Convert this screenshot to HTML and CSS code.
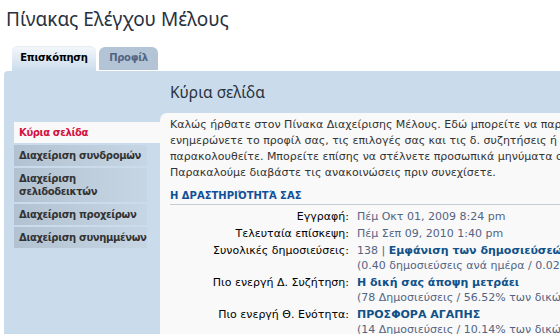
FILE: index.html
```
<html>
<head>
  <meta charset="utf-8">
  <link rel="stylesheet" href="styles.css">
</head>
<body>
  <div class="page">
    <h1 class="page-title">Πίνακας Ελέγχου Μέλους</h1>
    <div class="tabs">
      <a class="tab active">Επισκόπηση</a>
      <a class="tab">Προφίλ</a>
    </div>
    <div class="panel">
      <div class="side">
        <ul class="menu">
          <li class="active"><a>Κύρια σελίδα</a></li>
          <li><a>Διαχείριση συνδρομών</a></li>
          <li><a>Διαχείριση<br>σελιδοδεικτών</a></li>
          <li><a>Διαχείριση προχείρων</a></li>
          <li><a>Διαχείριση συνημμένων</a></li>
        </ul>
      </div>
      <div class="main">
        <h2 class="main-title">Κύρια σελίδα</h2>
        <div class="content">
          <p class="intro">Καλώς ήρθατε στον Πίνακα Διαχείρισης Μέλους. Εδώ μπορείτε να παρακολουθείτε, να δείτε και να<br>
          ενημερώνετε το προφίλ σας, τις επιλογές σας και τις δ. συζητήσεις ή τις θ. ενότητες που<br>
          παρακολουθείτε. Μπορείτε επίσης να στέλνετε προσωπικά μηνύματα σε άλλα μέλη.<br>
          Παρακαλούμε διαβάστε τις ανακοινώσεις πριν συνεχίσετε.</p>
          <h3 class="section">Η ΔΡΑΣΤΗΡΙΌΤΗΤΆ ΣΑΣ</h3>
          <dl class="details">
            <dt>Εγγραφή:</dt>
            <dd>Πέμ Οκτ 01, 2009 8:24 pm</dd>
            <dt>Τελευταία επίσκεψη:</dt>
            <dd>Πέμ Σεπ 09, 2010 1:40 pm</dd>
            <dt>Συνολικές δημοσιεύσεις:</dt>
            <dd>138 | <a>Εμφάνιση των δημοσιεύσεών σας</a><br>(0.40 δημοσιεύσεις ανά ημέρα / 0.02% όλων των δημοσιεύσεων)</dd>
            <dt>Πιο ενεργή Δ. Συζήτηση:</dt>
            <dd><a>Η δική σας άποψη μετράει</a><br>(78 Δημοσιεύσεις / 56.52% των δικών σας δημοσιεύσεων)</dd>
            <dt>Πιο ενεργή Θ. Ενότητα:</dt>
            <dd><a>ΠΡΟΣΦΟΡΑ ΑΓΑΠΗΣ</a><br>(14 Δημοσιεύσεις / 10.14% των δικών σας δημοσιεύσεων)</dd>
          </dl>
        </div>
      </div>
    </div>
  </div>
</body>
</html>
```

FILE: styles.css
```
html, body {
  margin: 0;
  padding: 0;
  overflow: hidden;
  background: #fff;
  font-family: 'DejaVu Sans', Verdana, sans-serif;
}
.page {
  padding: 0 0 0 4px;
  width: 900px;
}
.page-title {
  margin: 0 0 0 2px;
  padding-top: 6px;
  height: 40px;
  font-family: 'Noto Sans', 'Open Sans', sans-serif;
  font-weight: normal;
  font-size: 19px;
  line-height: 26px;
  color: #28313f;
}
.tabs {
  display: flex;
  align-items: flex-end;
  gap: 3px;
  padding-left: 8px;
  height: 25px;
}
.tab {
  display: block;
  font-size: 10px;
  font-weight: bold;
  letter-spacing: -0.3px;
  text-align: center;
  border-radius: 6px 6px 0 0;
}
.tab.active {
  width: 84px;
  height: 25px;
  line-height: 23px;
  color: #000;
  background: linear-gradient(#f4f8fb, #cadceb);
  box-shadow: inset 0 1px 0 #e4edf4;
}
.tab:not(.active) {
  width: 59px;
  height: 23px;
  line-height: 22px;
  margin-bottom: 1px;
  color: #536482;
  background: #b2c4d5;
}
.panel {
  display: flex;
  background: #cadceb;
  height: 280px;
  border-top-left-radius: 4px;
}
.side {
  width: 156px;
  flex: none;
}
.menu {
  list-style: none;
  margin: 51px 0 0 10px;
  padding: 0;
}
.menu li {
  margin-bottom: 2px;
}
.menu a {
  display: block;
  width: 128px;
  padding: 4px 0 4px 5px;
  font-size: 10px;
  letter-spacing: -0.35px;
  line-height: 13px;
  font-weight: bold;
  white-space: nowrap;
  color: #333;
  background: linear-gradient(to right, #b2c2d1, #c6d6e4);
}
.menu li.active a {
  width: 141px;
  color: #d31141;
  background: #f9f9f9;
}
.main {
  flex: 1;
}
.main-title {
  margin: 0;
  height: 42px;
  padding-left: 10px;
  font-family: 'Noto Sans', 'Open Sans', sans-serif;
  font-weight: normal;
  font-size: 15.5px;
  line-height: 43px;
  color: #28313f;
}
.content {
  background: #f9f9f9;
  border-top-left-radius: 7px;
  padding: 4px 10px 0 10px;
  height: 240px;
  font-size: 11px;
  color: #333;
}
.intro {
  margin: 0;
  line-height: 16px;
  white-space: nowrap;
}
.section {
  margin: 8px 0 0 0;
  padding-bottom: 2px;
  font-size: 10px;
  line-height: 13px;
  color: #115098;
  border-bottom: 1px solid #c4ccd4;
  width: 700px;
}
.details {
  display: grid;
  grid-template-columns: 179px 1fr;
  column-gap: 8px;
  row-gap: 2px;
  margin: 4px 0 0 0;
  line-height: 15px;
}
.details dt {
  text-align: right;
  color: #000;
}
.details dd {
  margin: 0;
  color: #536482;
  white-space: nowrap;
}
.details a {
  font-weight: bold;
  color: #105289;
}
```
